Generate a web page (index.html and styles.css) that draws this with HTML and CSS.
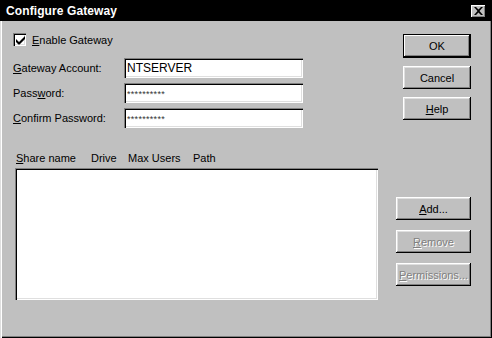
FILE: index.html
```html
<!DOCTYPE html>
<html>
<head>
<meta charset="utf-8">
<link rel="stylesheet" href="styles.css">
</head>
<body>
<div class="window">
  <div class="titlebar">
    <span class="title">Configure Gateway</span>
    <span class="close">
      <svg width="9" height="8" viewBox="0 0 9 8"><path d="M0 0h2l2.5 2.5L7 0h2L5.5 4 9 8H7L4.5 5.5 2 8H0l3.5-4z" fill="#000"/></svg>
    </span>
  </div>
  <div class="body">
    <div class="left">
      <div class="check-row">
        <span class="checkbox">
          <svg width="9" height="9" viewBox="0 0 9 9"><path d="M0 3v3l2.5 2.5h1L9 3V0L3 6z" fill="#000"/></svg>
        </span>
        <span class="label"><u>E</u>nable Gateway</span>
      </div>
      <div class="form">
        <span class="flabel"><u>G</u>ateway Account:</span>
        <span class="field">NTSERVER</span>
        <span class="flabel">Pass<u>w</u>ord:</span>
        <span class="field pw">**********</span>
        <span class="flabel"><u>C</u>onfirm Password:</span>
        <span class="field pw">**********</span>
      </div>
      <div class="cols">
        <span class="c1"><u>S</u>hare name</span>
        <span class="c2">Drive</span>
        <span class="c3">Max Users</span>
        <span class="c4">Path</span>
      </div>
      <div class="listbox"></div>
    </div>
    <div class="right">
      <button class="btn default ok">OK</button>
      <button class="btn cancel">Cancel</button>
      <button class="btn help"><u>H</u>elp</button>
      <button class="btn wide add"><u>A</u>dd...</button>
      <button class="btn wide dis remove"><u>R</u>emove</button>
      <button class="btn wide dis perm"><u>P</u>ermissions...</button>
    </div>
  </div>
</div>
</body>
</html>
```
FILE: styles.css
```css
* { box-sizing: border-box; }
html, body { margin: 0; padding: 0; }
body {
  width: 492px;
  height: 338px;
  background: #c0c0c0;
  font-family: "Liberation Sans", Arial, sans-serif;
  font-size: 11px;
  color: #000;
  overflow: hidden;
}
.window {
  width: 492px;
  height: 338px;
  display: flex;
  flex-direction: column;
  background: #c0c0c0;
}
.titlebar {
  height: 21px;
  background: #000;
  display: flex;
  align-items: center;
  justify-content: space-between;
  padding: 0 6px 0 6px;
}
.title {
  color: #fff;
  font-weight: bold;
  font-size: 12px;
  letter-spacing: 0.1px;
}
.close {
  width: 15px;
  height: 13px;
  background: #c0c0c0;
  display: flex;
  align-items: center;
  justify-content: center;
  box-shadow: inset -1px -1px #000, inset 1px 1px #fff, inset -2px -2px #808080;
  margin-top: 1px;
}
.body {
  flex: 1;
  display: flex;
  justify-content: space-between;
  box-shadow: inset 1px 0 #dfdfdf, inset 2px 0 #fff, inset -1px -1px #000, inset -2px -2px #808080;
}
.left {
  padding-left: 13px;
  display: flex;
  flex-direction: column;
}
.check-row {
  margin-top: 12px;
  display: flex;
  align-items: center;
  height: 13px;
}
.checkbox {
  width: 13px;
  height: 13px;
  background: #fff;
  box-shadow: inset 1px 1px #808080, inset 2px 2px #000, inset -1px -1px #fff, inset -2px -2px #dfdfdf;
  display: flex;
  align-items: center;
  justify-content: center;
  padding: 1px 0 0 1px;
}
.label { margin-left: 6px; }
.form {
  margin-top: 12px;
  display: grid;
  grid-template-columns: 111px 179px;
  grid-auto-rows: 20px;
  row-gap: 5px;
  align-items: center;
}
.field {
  height: 20px;
  background: #fff;
  box-shadow: inset 1px 1px #808080, inset 2px 2px #000, inset -1px -1px #fff, inset -2px -2px #dfdfdf;
  padding: 3px 0 0 3px;
  font-size: 12px;
  line-height: 14px;
}
.field.pw {
  font-size: 9px;
  color: #333;
  padding-top: 4px;
  letter-spacing: 0.3px;
}
.cols {
  margin-top: 24px;
  display: flex;
  padding-left: 3px;
  height: 13px;
  line-height: 13px;
}
.c1 { width: 75px; }
.c2 { width: 37px; }
.c3 { width: 65px; }
.listbox {
  margin-top: 3px;
  margin-left: 2px;
  width: 363px;
  height: 132px;
  background: #fff;
  box-shadow: inset 1px 1px #808080, inset 2px 2px #000, inset -1px -1px #fff, inset -2px -2px #dfdfdf;
}
.right {
  padding-right: 21px;
  display: flex;
  flex-direction: column;
  align-items: flex-end;
}
.btn {
  font-family: "Liberation Sans", Arial, sans-serif;
  font-size: 11px;
  color: #000;
  background: #c0c0c0;
  border: none;
  padding: 0;
  width: 68px;
  height: 23px;
  box-shadow: inset -1px -1px #000, inset 1px 1px #fff, inset -2px -2px #808080, inset 2px 2px #dfdfdf;
}
.btn.default {
  height: 24px;
  box-shadow: inset 0 0 0 1px #000, inset -2px -2px #000, inset 2px 2px #fff, inset -3px -3px #808080;
}
.ok { margin-top: 13px; }
.cancel { margin-top: 8px; }
.help { margin-top: 8px; }
.wide { width: 75px; }
.add { margin-top: 77px; }
.remove { margin-top: 10px; }
.perm { margin-top: 10px; }
.dis {
  color: #808080;
  text-shadow: 1px 1px #fff;
}
```
